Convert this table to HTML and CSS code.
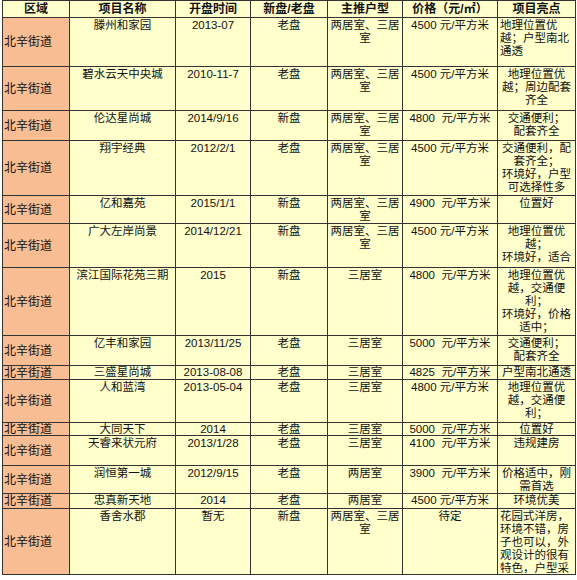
FILE: index.html
```html
<!DOCTYPE html>
<html lang="zh-CN">
<head>
<meta charset="utf-8">
<title>北辛街道楼盘</title>
<link rel="stylesheet" href="styles.css">
</head>
<body>
<div class="sheet">
  <div class="row head">
    <div class="cell">区域</div><div class="cell">项目名称</div><div class="cell">开盘时间</div><div class="cell">新盘/老盘</div><div class="cell">主推户型</div><div class="cell">价格（元/㎡）</div><div class="cell">项目亮点</div>
  </div>
  <div class="row">
    <div class="cell area">北辛街道</div><div class="cell">滕州和家园</div><div class="cell">2013-07</div><div class="cell">老盘</div><div class="cell">两居室、三居<br>室</div><div class="cell">4500 元/平方米</div><div class="cell left">地理位置优<br>越；户型南北<br>通透</div>
  </div>
  <div class="row">
    <div class="cell area">北辛街道</div><div class="cell">碧水云天中央城</div><div class="cell">2010-11-7</div><div class="cell">老盘</div><div class="cell">两居室、三居<br>室</div><div class="cell">4500 元/平方米</div><div class="cell">地理位置优<br>越；周边配套<br>齐全</div>
  </div>
  <div class="row">
    <div class="cell area">北辛街道</div><div class="cell">伦达星尚城</div><div class="cell">2014/9/16</div><div class="cell">新盘</div><div class="cell">两居室、三居<br>室</div><div class="cell">4800&nbsp; 元/平方米</div><div class="cell">交通便利；<br>配套齐全</div>
  </div>
  <div class="row">
    <div class="cell area">北辛街道</div><div class="cell">翔宇经典</div><div class="cell">2012/2/1</div><div class="cell">老盘</div><div class="cell">两居室、三居<br>室</div><div class="cell">4500 元/平方米</div><div class="cell">交通便利，配<br>套齐全；<br>环境好，户型<br>可选择性多</div>
  </div>
  <div class="row">
    <div class="cell area">北辛街道</div><div class="cell">亿和嘉苑</div><div class="cell">2015/1/1</div><div class="cell">新盘</div><div class="cell">两居室、三居<br>室</div><div class="cell">4900&nbsp; 元/平方米</div><div class="cell">位置好</div>
  </div>
  <div class="row">
    <div class="cell area">北辛街道</div><div class="cell">广大左岸尚景</div><div class="cell">2014/12/21</div><div class="cell">新盘</div><div class="cell">两居室、三居<br>室</div><div class="cell">4500 元/平方米</div><div class="cell">地理位置优<br>越；<br>环境好，适合</div>
  </div>
  <div class="row">
    <div class="cell area">北辛街道</div><div class="cell">滨江国际花苑三期</div><div class="cell">2015</div><div class="cell">新盘</div><div class="cell">三居室</div><div class="cell">4800&nbsp; 元/平方米</div><div class="cell">地理位置优<br>越，交通便<br>利；<br>环境好，价格<br>适中；</div>
  </div>
  <div class="row">
    <div class="cell area">北辛街道</div><div class="cell">亿丰和家园</div><div class="cell">2013/11/25</div><div class="cell">老盘</div><div class="cell">三居室</div><div class="cell">5000&nbsp; 元/平方米</div><div class="cell">交通便利；<br>配套齐全</div>
  </div>
  <div class="row tight">
    <div class="cell area">北辛街道</div><div class="cell">三盛星尚城</div><div class="cell">2013-08-08</div><div class="cell">老盘</div><div class="cell">三居室</div><div class="cell">4825&nbsp; 元/平方米</div><div class="cell">户型南北通透</div>
  </div>
  <div class="row">
    <div class="cell area">北辛街道</div><div class="cell">人和蓝湾</div><div class="cell">2013-05-04</div><div class="cell">老盘</div><div class="cell">三居室</div><div class="cell">4800 元/平方米</div><div class="cell">地理位置优<br>越，交通便<br>利；</div>
  </div>
  <div class="row tight">
    <div class="cell area">北辛街道</div><div class="cell">大同天下</div><div class="cell">2014</div><div class="cell">老盘</div><div class="cell">三居室</div><div class="cell">5000&nbsp; 元/平方米</div><div class="cell">位置好</div>
  </div>
  <div class="row">
    <div class="cell area">北辛街道</div><div class="cell">天睿来状元府</div><div class="cell">2013/1/28</div><div class="cell">老盘</div><div class="cell">三居室</div><div class="cell">4100&nbsp; 元/平方米</div><div class="cell">违规建房</div>
  </div>
  <div class="row">
    <div class="cell area">北辛街道</div><div class="cell">润恒第一城</div><div class="cell">2012/9/15</div><div class="cell">老盘</div><div class="cell">两居室</div><div class="cell">3900&nbsp; 元/平方米</div><div class="cell">价格适中，刚<br>需首选</div>
  </div>
  <div class="row tight">
    <div class="cell area">北辛街道</div><div class="cell">忠真新天地</div><div class="cell">2014</div><div class="cell">老盘</div><div class="cell">两居室</div><div class="cell">4500 元/平方米</div><div class="cell">环境优美</div>
  </div>
  <div class="row">
    <div class="cell area">北辛街道</div><div class="cell">香舍水郡</div><div class="cell">暂无</div><div class="cell">新盘</div><div class="cell">两居室、三居<br>室</div><div class="cell">待定</div><div class="cell left">花园式洋房，<br>环境不错，房<br>子也可以，外<br>观设计的很有<br>特色，户型采</div>
  </div>
</div>
</body>
</html>
```

FILE: styles.css
```css
html, body {
  margin: 0;
  padding: 0;
  background: #ffffff;
}

body {
  font-family: "Liberation Sans", "Noto Sans CJK SC", sans-serif;
  font-size: 11.5px;
  color: #111111;
}

.sheet {
  display: grid;
  grid-template-columns: 66px 105px 74px 76px 74px 94px 77px;
  grid-template-rows: 16px 48px 43px 29px 54px 27px 43px 67px 29px 13px 42px 12px 29px 27px 14px 65px;
  gap: 1px;
  padding: 1px;
  margin-left: 2px;
  width: max-content;
  background: #333333;
}

.row {
  display: contents;
}

.cell {
  background: #ffffcc;
  overflow: hidden;
  text-align: center;
  line-height: 13px;
  white-space: nowrap;
  padding-top: 1px;
  box-sizing: border-box;
}

.cell.left {
  text-align: left;
  padding-left: 2px;
}

.cell.area {
  background: #f8bd92;
  display: flex;
  align-items: center;
  text-align: left;
  padding: 0 0 0 1px;
  font-size: 12px;
  line-height: 12px;
}

.tight .cell {
  line-height: 12px;
  padding-top: 0;
}

.head .cell {
  font-weight: 700;
  font-size: 12px;
  line-height: 16px;
  padding-top: 0;
}
```
